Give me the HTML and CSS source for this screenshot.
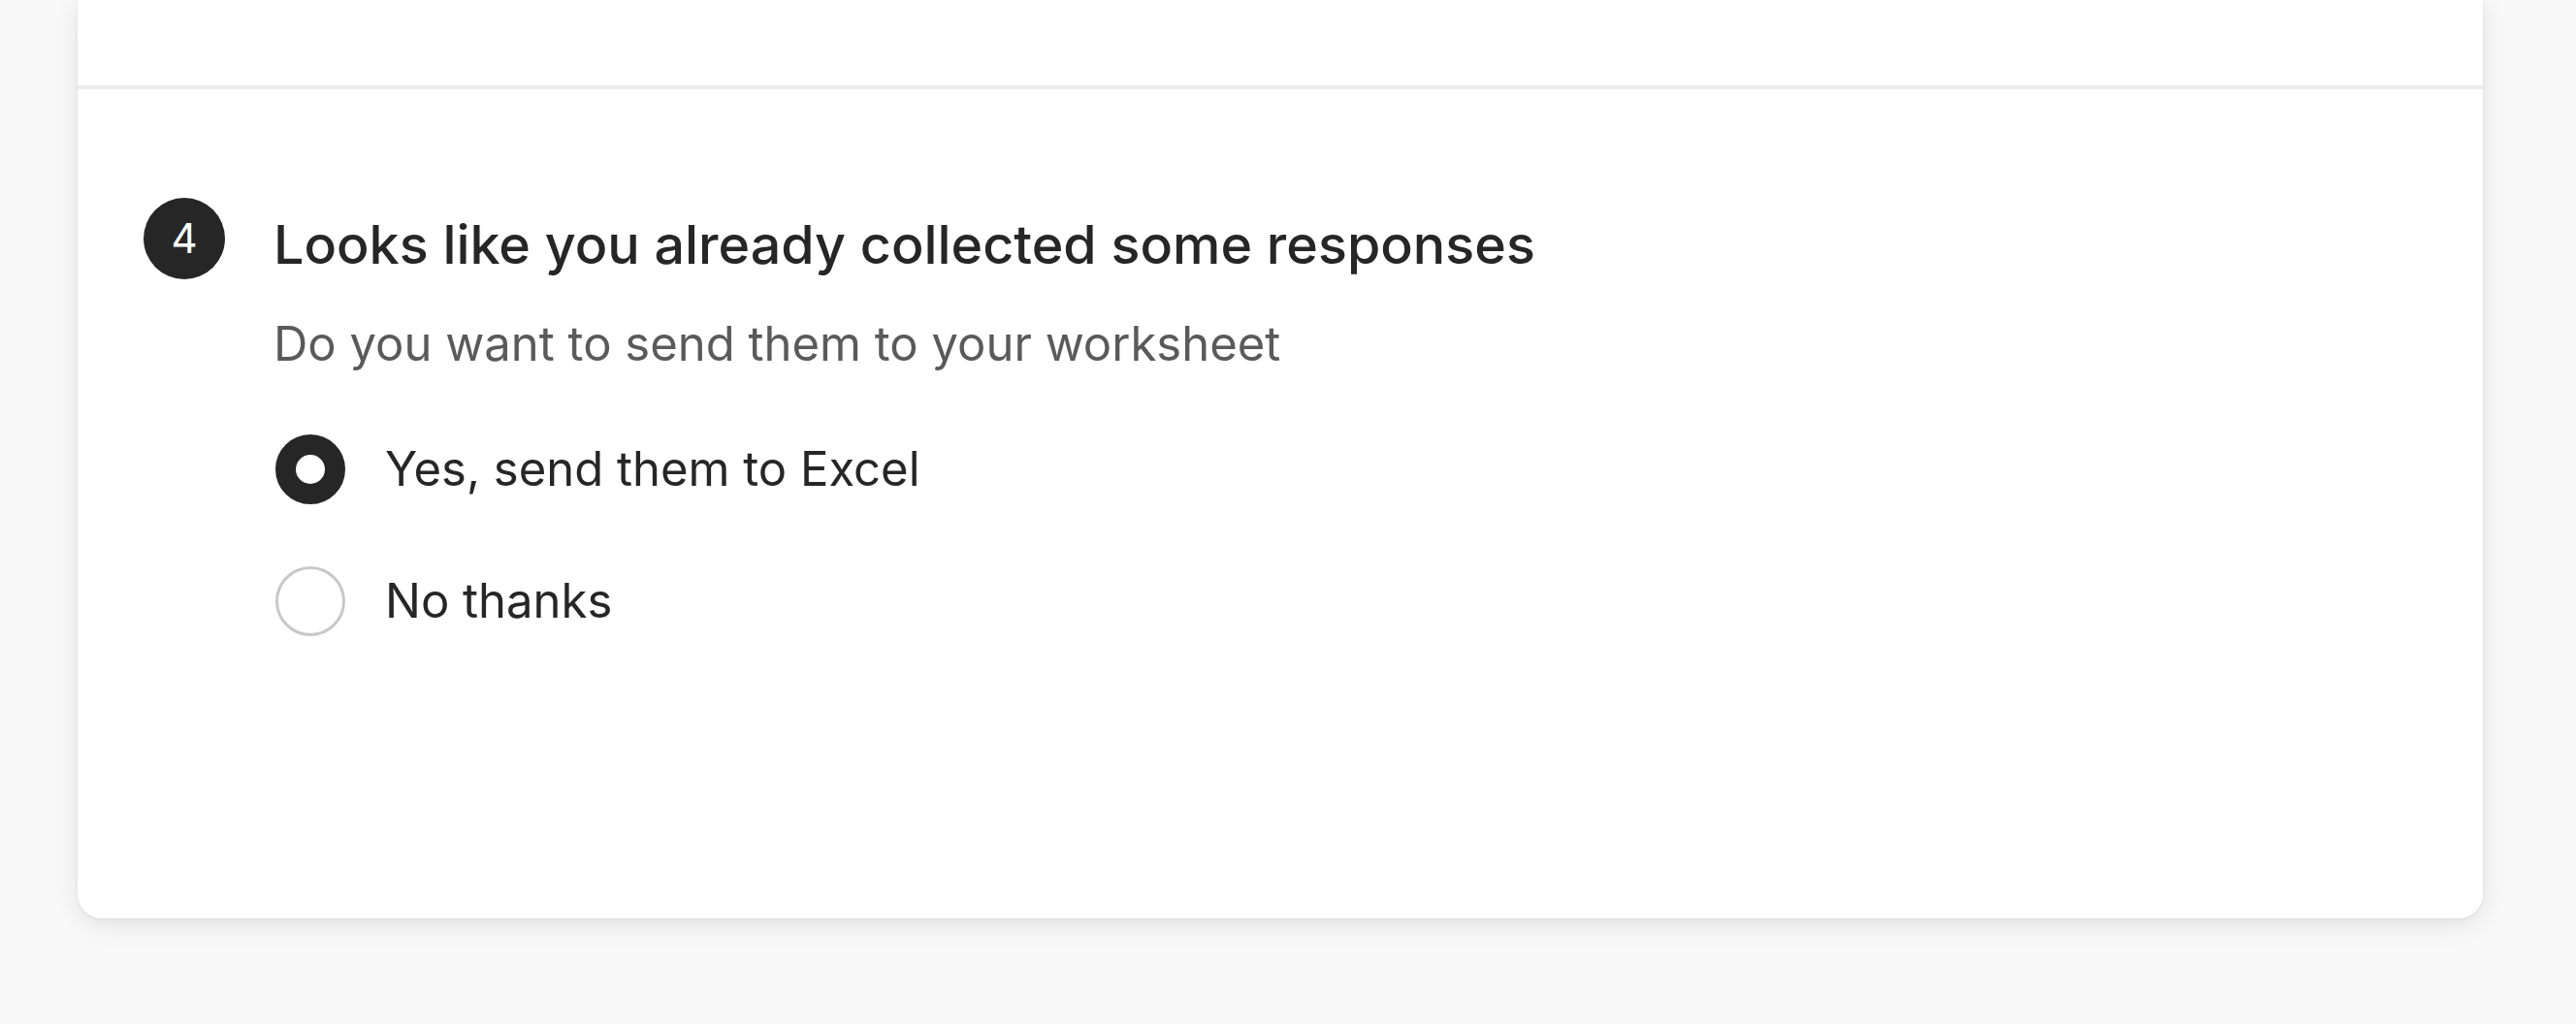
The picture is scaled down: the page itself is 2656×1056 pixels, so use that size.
FILE: index.html
```html
<!DOCTYPE html>
<html lang="en">
<head>
<meta charset="utf-8">
<title>Import responses</title>
<link rel="stylesheet" href="styles.css">
</head>
<body>
  <div class="card">
    <div class="card-top"></div>
    <div class="divider"></div>
    <section class="step">
      <div class="badge">4</div>
      <div class="step-body">
        <h2 class="title">Looks like you already collected some responses</h2>
        <p class="subtitle">Do you want to send them to your worksheet</p>
        <div class="options">
          <label class="option">
            <span class="radio radio-checked"></span>
            <span class="option-label">Yes, send them to Excel</span>
          </label>
          <label class="option">
            <span class="radio"></span>
            <span class="option-label">No thanks</span>
          </label>
        </div>
      </div>
    </section>
  </div>
</body>
</html>
```

FILE: styles.css
```css
html, body {
  margin: 0;
  padding: 0;
}
body {
  background: #f9f9f9;
  font-family: Inter, "Noto Sans", "Liberation Sans", sans-serif;
  color: #262626;
  height: 1056px;
  overflow: hidden;
}
.card {
  margin: 0 96px 0 80px;
  background: #ffffff;
  border-radius: 0 0 25px 25px;
  box-shadow: 0 6px 28px rgba(0, 0, 0, 0.10), 0 1px 4px rgba(0, 0, 0, 0.05);
}
.card-top {
  height: 88px;
}
.divider {
  height: 4px;
  background: #ececec;
}
.step {
  display: flex;
  align-items: flex-start;
  padding: 112px 68px 291px 68px;
}
.badge {
  flex: none;
  width: 84px;
  height: 84px;
  border-radius: 50%;
  background: #262626;
  color: #ffffff;
  font-size: 42px;
  line-height: 84px;
  text-align: center;
}
.step-body {
  margin-left: 50px;
  padding-top: 14px;
}
.title {
  margin: 0;
  font-size: 55.6px;
  font-weight: 500;
  line-height: 68px;
  color: #262626;
}
.subtitle {
  margin: 40px 0 0 0;
  font-size: 49px;
  line-height: 58px;
  color: #5a5a5a;
}
.options {
  display: flex;
  flex-direction: column;
  gap: 64px;
  margin-top: 64px;
  margin-left: 2px;
}
.option {
  display: flex;
  align-items: center;
  gap: 41px;
  height: 72px;
}
.radio {
  flex: none;
  box-sizing: border-box;
  width: 72px;
  height: 72px;
  border-radius: 50%;
  border: 3px solid #c8c8c8;
  background: #ffffff;
}
.radio-checked {
  border: 21px solid #262626;
}
.option-label {
  font-size: 49px;
  line-height: 58px;
  color: #262626;
}
```
